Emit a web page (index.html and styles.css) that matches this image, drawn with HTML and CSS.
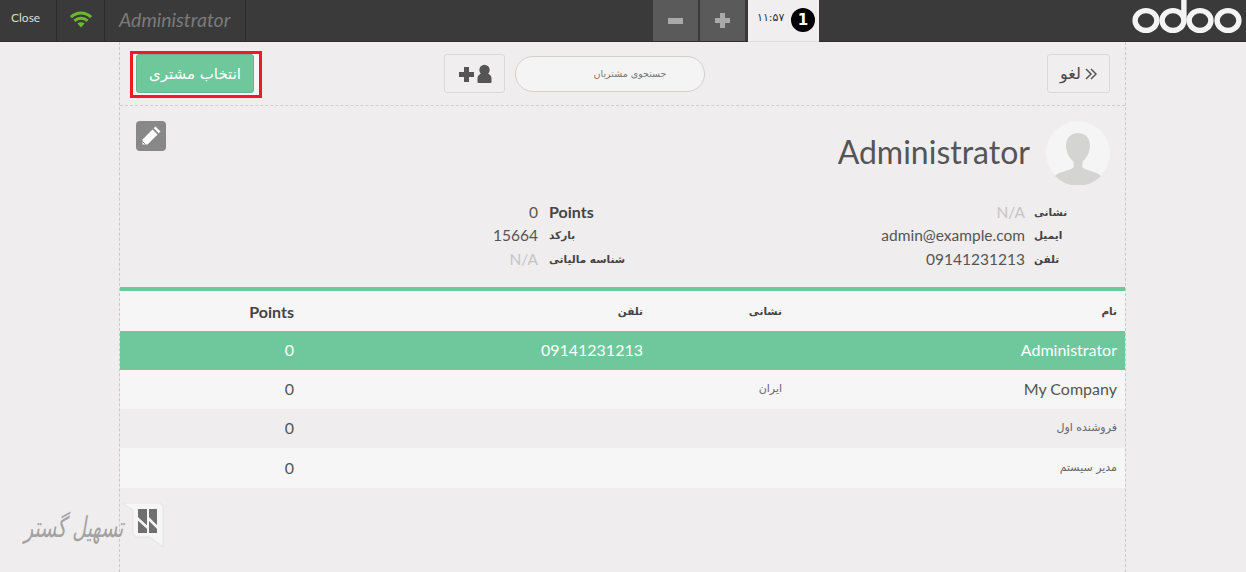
FILE: index.html
```html
<!DOCTYPE html>
<html lang="fa">
<head>
<meta charset="utf-8">
<title>Odoo POS</title>
<link rel="stylesheet" href="styles.css">
</head>
<body>
<header class="topbar">
  <button class="bar-close">Close</button>
  <div class="bar-wifi">
    <svg width="22" height="17" viewBox="0 0 22 17"><g fill="none" stroke="#6cb92f" stroke-width="3"><path d="M1 6.200C6.500 .6 15.500 .6 21 6.200"/><path d="M4.500 9.800C8 6.400 14 6.400 17.500 9.800"/></g><path d="M7.400 12.500C9.500 10.700 12.500 10.700 14.600 12.500L11 16.600Z" fill="#6cb92f"/></svg>
  </div>
  <div class="bar-user">Administrator</div>
  <div class="bar-orders">
    <button class="bar-step"><svg width="15" height="6" viewBox="0 0 15 6"><rect width="15" height="6" fill="#a9a9a9"/></svg></button>
    <button class="bar-step"><svg width="15" height="15" viewBox="0 0 15 15"><path d="M5 0h5v5h5v5h-5v5H5v-5H0V5h5z" fill="#a9a9a9"/></svg></button>
    <div class="bar-tab"><span class="tab-time">۱۱:۵۷</span><span class="tab-num">1</span></div>
  </div>
  <svg class="logo" width="112" height="36" viewBox="0 0 112 36"><g fill="none" stroke="#f4f4f4" stroke-width="5.400"><ellipse cx="15" cy="20.500" rx="10.900" ry="9.900"/><ellipse cx="42" cy="20.500" rx="10.900" ry="9.900"/><ellipse cx="69" cy="20.500" rx="10.900" ry="9.900"/><ellipse cx="97" cy="20.500" rx="10.900" ry="9.900"/><path d="M52.900 0V20.500"/></g></svg>
</header>

<main class="screen">
  <section class="toolbar">
    <div class="select-mark"><button class="btn-select">انتخاب مشتری</button></div>
    <button class="btn-add"><svg width="34" height="19" viewBox="0 0 34 19"><path d="M6 3h5v5h5v5h-5v5H6v-5H1V8h5z" fill="#555"/><circle cx="26.500" cy="6" r="5.200" fill="#555"/><path d="M19.500 18v-3.500c0-3 2.500-5 5-5h4c2.500 0 5 2 5 5V18a1 1 0 0 1-1 1h-12a1 1 0 0 1-1-1z" fill="#555"/></svg></button>
    <div class="search">جستجوی مشتریان</div>
    <button class="btn-cancel"><span>لغو</span><svg width="12" height="12" viewBox="0 0 12 12"><path d="M1 1l5 5-5 5M6 1l5 5-5 5" fill="none" stroke="#555" stroke-width="1.500"/></svg></button>
  </section>

  <section class="details">
    <div class="details-head">
      <button class="btn-edit"><svg width="22" height="22" viewBox="0 0 22 22"><path d="M15.500 1.500l5 5-1.800 1.800-5-5zM12.500 4.500l5 5L7.500 19.500H2.500v-5z" fill="#fff"/><path d="M2.500 16.500l3 3" stroke="#888" stroke-width="1"/></svg></button>
      <h1 class="details-name">Administrator</h1>
      <svg class="avatar" width="64" height="64" viewBox="0 0 64 64"><circle cx="32" cy="32" r="32" fill="#f5f5f5"/><path d="M9 55c3-4 13-5 18-8 1-2 1-4 0-7-4-3-7-10-7-15 0-8 5-13 12-13s12 5 12 13c0 5-3 12-7 15-1 3-1 5 0 7 5 3 15 4 18 8a32 32 0 0 1-46 0z" fill="#d4d4d3"/></svg>
    </div>
    <div class="details-cols">
      <dl class="facts facts-left">
        <dd>0</dd><dt class="latin">Points</dt>
        <dd>15664</dd><dt>بارکد</dt>
        <dd class="empty">N/A</dd><dt>شناسه مالیاتی</dt>
      </dl>
      <dl class="facts facts-right">
        <dd class="empty">N/A</dd><dt>نشانی</dt>
        <dd>admin@example.com</dd><dt>ایمیل</dt>
        <dd>09141231213</dd><dt>تلفن</dt>
      </dl>
    </div>
  </section>

  <table class="clients">
    <thead>
      <tr><th class="c-points latin">Points</th><th class="c-phone">تلفن</th><th class="c-addr">نشانی</th><th class="c-name">نام</th></tr>
    </thead>
    <tbody>
      <tr class="active"><td>0</td><td>09141231213</td><td></td><td>Administrator</td></tr>
      <tr><td>0</td><td></td><td class="fa">ایران</td><td>My Company</td></tr>
      <tr class="alt"><td>0</td><td></td><td></td><td class="fa">فروشنده اول</td></tr>
      <tr class="last"><td>0</td><td></td><td></td><td class="fa">مدیر سیستم</td></tr>
    </tbody>
  </table>
</main>

<div class="watermark">
  <span class="wm-text">تسهیل گستر</span>
  <svg class="wm-mark" width="42" height="45" viewBox="0 0 42 45"><path d="M0 0H38l3 3V44L28 34H14l-3-3V7z" fill="#f6f6f6" stroke="#e4e4e4"/><path d="M16 6h9v24h-9zM27 6h8v24h-8z" fill="#6f6f6f"/><path d="M15 15l11 10M26 15l10 10" stroke="#f6f6f6" stroke-width="2.500"/></svg>
</div>
</body>
</html>
```
FILE: styles.css
```css
* { box-sizing: border-box; }
html, body { height: 100%; }
body {
  margin: 0;
  height: 572px;
  overflow: hidden;
  background: #efedee;
  color: #555;
  font-family: Lato, "DejaVu Sans", sans-serif;
  font-size: 16px;
}
button { font-family: inherit; cursor: pointer; padding: 0; }

.topbar {
  display: flex;
  height: 42px;
  background: #3a3a3a;
  border-bottom: 1px solid #2f2f2f;
}
.bar-close {
  width: 57px;
  height: 41px;
  padding-bottom: 7px;
  background: none;
  border: 0;
  border-right: 1px solid #2c2c2c;
  color: #ddd;
  font-size: 12px;
  font-family: Lato, sans-serif;
  text-align: left;
  padding-left: 11px;
}
.bar-wifi {
  display: flex;
  justify-content: center;
  width: 48px;
  padding: 11px 0 0 1px;
  border-right: 1px solid #2c2c2c;
}
.bar-user {
  width: 141px;
  padding: 8px 0 0 14px;
  border-right: 1px solid #2c2c2c;
  color: #7a7a7a;
  font-size: 19.500px;
  font-style: italic;
}
.bar-orders { display: flex; margin-left: 407px; }
.bar-step {
  display: flex;
  align-items: center;
  justify-content: center;
  width: 45px;
  height: 41px;
  margin-right: 2px;
  background: #5a5a5a;
  border: 0;
}
.bar-tab {
  display: flex;
  align-items: center;
  width: 71px;
  height: 42px;
  margin-left: 1px;
  padding: 0 0 2px 9px;
  background: #f0eeee;
  border-bottom: 1px solid #ddd;
}
.tab-time {
  width: 34px;
  margin-bottom: 4px;
  color: #333;
  font-family: "DejaVu Sans", sans-serif;
  font-size: 11px;
}
.tab-num {
  display: flex;
  align-items: center;
  justify-content: center;
  width: 24px;
  height: 24px;
  border-radius: 50%;
  background: #000;
  color: #fff;
  font-family: "DejaVu Sans", sans-serif;
  font-weight: 700;
  font-size: 15px;
}
.logo { margin-left: auto; margin-right: 3px; }

.screen {
  width: 1007px;
  height: 530px;
  margin-left: 119px;
  border-left: 1px dashed #c9c9c9;
  border-right: 1px dashed #c9c9c9;
}
.toolbar {
  display: flex;
  align-items: flex-start;
  height: 64px;
  padding: 12px 0 0 16px;
  border-bottom: 1px dashed #cfcfcf;
}
.select-mark {
  position: relative;
  width: 118px;
  height: 39px;
}
.select-mark::before {
  content: "";
  position: absolute;
  inset: -3px -8px -5px -6px;
  background: #f6f6f6;
  border: 3px solid #ed1c24;
}
.btn-select {
  position: relative;
  width: 118px;
  height: 39px;
  background: #6ec89b;
  border: 1px solid #62b78d;
  border-radius: 3px;
  color: #fff;
  font-family: "DejaVu Sans", sans-serif;
  font-size: 15px;
}
.btn-add, .btn-cancel {
  display: flex;
  align-items: center;
  justify-content: center;
  height: 39px;
  background: #f0eeee;
  border: 1px solid #d9d9d9;
  border-radius: 3px;
}
.btn-add { width: 61px; margin-left: 190px; }
.search {
  width: 190px;
  height: 36px;
  margin: 2px 0 0 10px;
  padding: 0 0 1px 40px;
  background: #f5f4f4;
  border: 1px solid #d3d0cc;
  border-radius: 18px;
  color: #777;
  font-family: "DejaVu Sans", sans-serif;
  font-size: 9.500px;
  line-height: 34px;
  text-align: center;
}
.btn-cancel {
  gap: 4px;
  width: 63px;
  margin-left: auto;
  margin-right: 15px;
  color: #444;
  font-family: "DejaVu Sans", sans-serif;
  font-size: 16px;
}

.details {
  height: 181px;
  padding: 15px 15px 0 16px;
}
.details-head {
  display: flex;
  align-items: flex-start;
  height: 64px;
}
.btn-edit {
  display: flex;
  align-items: center;
  justify-content: center;
  width: 30px;
  height: 30px;
  background: #888;
  border: 0;
  border-radius: 4px;
}
.details-name {
  margin: 11px 16px 0 auto;
  font-size: 32px;
  font-weight: 400;
  line-height: 40px;
  color: #555;
}
.details-cols {
  display: flex;
  margin-top: 15px;
}
.facts {
  display: grid;
  grid-auto-rows: 23.500px;
  align-items: center;
  margin: 0;
}
.facts dd { margin: 0; text-align: right; font-size: 15.500px; }
.facts dt {
  color: #444;
  font-family: "DejaVu Sans", sans-serif;
  font-size: 10.500px;
  font-weight: 700;
}
.facts .empty { color: #c5c5c5; }
.facts .latin { font-family: Lato, sans-serif; font-size: 16px; }
.facts-left { grid-template-columns: 402px 90px; column-gap: 11px; }
.facts-right { grid-template-columns: 200px 60px; column-gap: 9px; margin-left: 186px; }

.clients {
  width: 1005px;
  border-collapse: collapse;
  table-layout: fixed;
  border-top: 4px solid #6ec89b;
  background: #f6f6f6;
}
.clients th, .clients td {
  padding: 0 8px 0 0;
  text-align: right;
  vertical-align: middle;
}
.clients th {
  height: 42px;
  color: #444;
  font-family: "DejaVu Sans", sans-serif;
  font-size: 10.500px;
  font-weight: 700;
}
.clients th.latin { font-family: Lato, sans-serif; font-size: 16px; }
.clients td { height: 39px; padding-bottom: 2px; font-size: 16px; }
.clients .last td { height: 40px; }
.clients .c-points { width: 174px; padding-right: 0; }
.clients .c-phone { width: 349px; padding-right: 0; }
.clients .c-addr { width: 139px; padding-right: 0; }
.clients td:not(:last-child) { padding-right: 0; }
.clients .active td { background: #6ec89b; color: #fff; }
.clients .alt td { background: #efedee; }
.clients .fa { color: #666; font-family: "DejaVu Sans", sans-serif; font-size: 11px; }

.watermark {
  position: absolute;
  left: 24px;
  top: 503px;
  display: flex;
  align-items: center;
}
.wm-text {
  width: 98px;
  color: #a2a2a2;
  font-family: "DejaVu Sans", sans-serif;
  font-size: 19px;
  font-style: italic;
  white-space: nowrap;
  transform: scaleY(1.5);
}
```
